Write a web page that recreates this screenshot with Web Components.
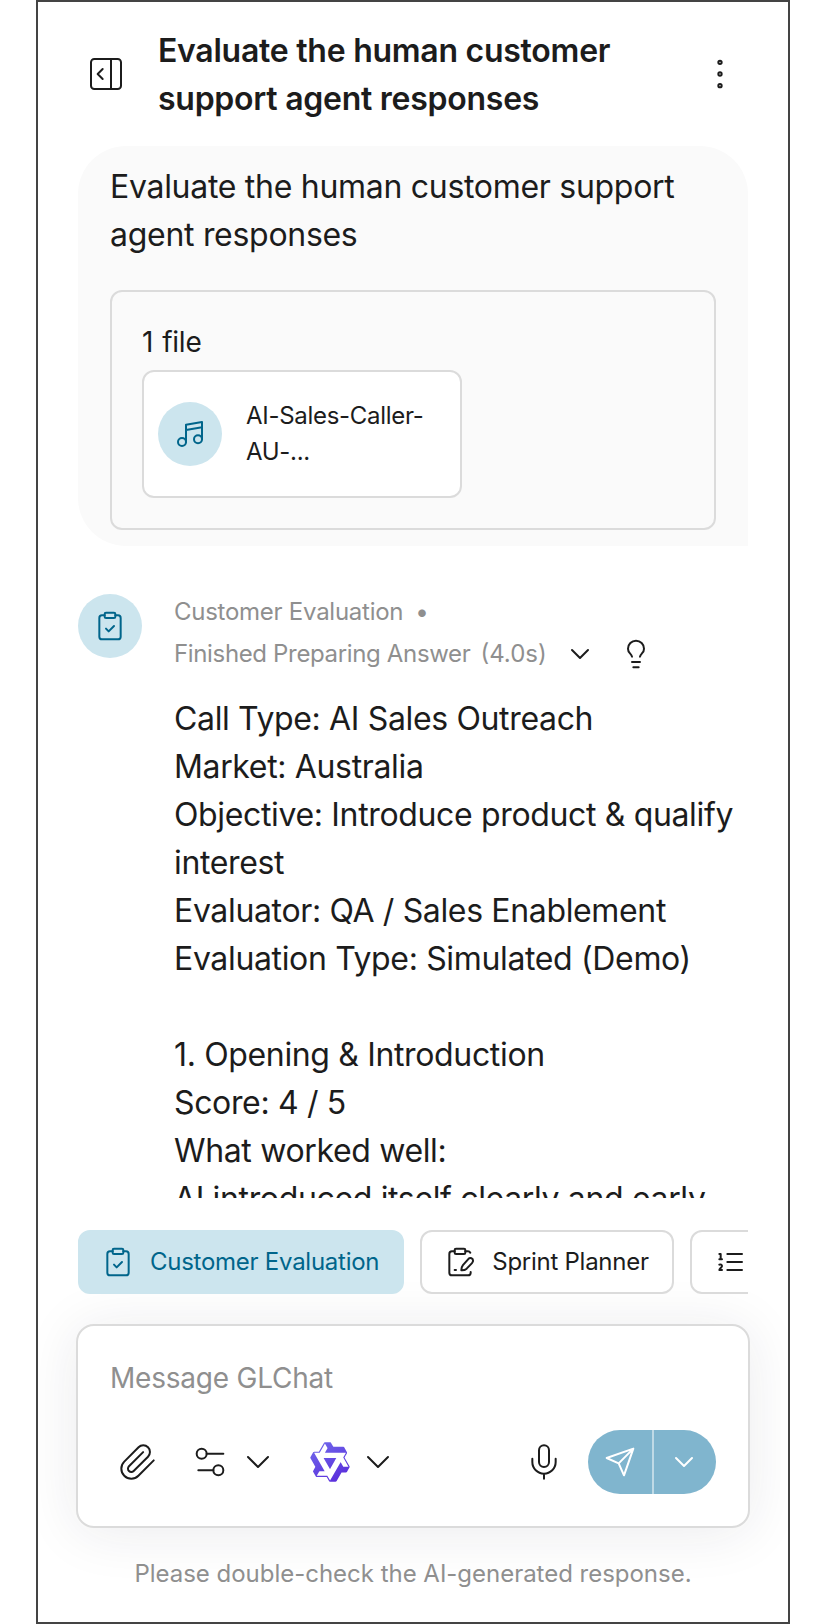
<!DOCTYPE html>
<html lang="en">
<head>
<meta charset="utf-8">
<title>GLChat</title>
<style>
    html, body {
        margin: 0;
        background: #ffffff;
    }
    body {
        --text: #1c1c1c;
        --muted: #8f8f8f;
        --line: #dbdbdb;
        --accent: #00658b;
        --accent-soft: #cce5ee;
        --accent-mid: #80b5ce;
        font-family: Inter, "Liberation Sans", sans-serif;
        letter-spacing: -0.26px;
        color: var(--text);
    }
</style>
</head>
<body>

<chat-screen>
    <chat-header slot="header">Evaluate the human customer support agent responses</chat-header>

    <user-message>
        Evaluate the human customer support agent responses
        <file-list slot="files" label="1 file">
            <file-card icon="music">AI-Sales-Caller-AU-...</file-card>
        </file-list>
    </user-message>

    <agent-message agent="Customer Evaluation" status="Finished Preparing Answer" time="(4.0s)">Call Type: AI Sales Outreach
Market: Australia
Objective: Introduce product &amp; qualify interest
Evaluator: QA / Sales Enablement
Evaluation Type: Simulated (Demo)

1. Opening &amp; Introduction
Score: 4 / 5
What worked well:
AI introduced itself clearly and early</agent-message>

    <agent-chips slot="footer">
        <agent-chip icon="clipboard-check" active>Customer Evaluation</agent-chip>
        <agent-chip icon="clipboard-pen">Sprint Planner</agent-chip>
        <agent-chip icon="list-ordered"></agent-chip>
    </agent-chips>
    <message-composer slot="footer" placeholder="Message GLChat"></message-composer>
    <chat-note slot="footer">Please double-check the AI-generated response.</chat-note>
</chat-screen>

<script>
    // Stroke icons on a 24 x 24 grid
    const ICONS = {
        "panel": '<rect x="3" y="3" width="18" height="18" rx="2"/><path d="M15 3v18M10 15l-3-3 3-3"/>',
        "more": '<circle cx="12" cy="5" r="1"/><circle cx="12" cy="12" r="1"/><circle cx="12" cy="19" r="1"/>',
        "music": '<path d="M9 18V5l12-2v13M9 9l12-2"/><circle cx="6" cy="18" r="3"/><circle cx="18" cy="16" r="3"/>',
        "clipboard-check": '<rect x="8" y="2" width="8" height="4" rx="1"/><path d="M16 4h2a2 2 0 0 1 2 2v14a2 2 0 0 1-2 2H6a2 2 0 0 1-2-2V6a2 2 0 0 1 2-2h2"/><path d="m9 14 2 2 4-4"/>',
        "clipboard-pen": '<rect x="8" y="2" width="8" height="4" rx="1"/><path d="M8 4H6a2 2 0 0 0-2 2v14a2 2 0 0 0 2 2h12a2 2 0 0 0 2-2v-.5"/><path d="M16 4h2a2 2 0 0 1 1.73 1M8 18h1"/><path d="M18.4 9.6a2 2 0 0 1 3.4 1.4c0 .6-.4 1.2-.8 1.8L17 17c-1 .9-2.4 1.3-4 1.2 0-1.5.4-2.8 1.2-3.8Z"/>',
        "list-ordered": '<path d="M10 6h11M10 12h11M10 18h11M4 6h1v4M4 10h2M6 18H4c0-1 2-2 2-3s-1-1.5-2-1"/>',
        "chevron": '<path d="m6 9 6 6 6-6"/>',
        "bulb": '<path d="M15 14c.2-1 .7-1.7 1.5-2.5 1-.9 1.5-2.2 1.5-3.5A6 6 0 0 0 6 8c0 1 .2 2.2 1.5 3.5.7.7 1.3 1.5 1.5 2.5M9 18h6M10 22h4"/>',
        "paperclip": '<path d="m21.44 11.05-9.19 9.19a6 6 0 0 1-8.49-8.49l8.57-8.57A4 4 0 1 1 18 8.84l-8.59 8.57a2 2 0 0 1-2.83-2.83l8.49-8.48"/>',
        "settings": '<path d="M20 7h-10M14 17H5"/><circle cx="17" cy="17" r="3"/><circle cx="7" cy="7" r="3"/>',
        "mic": '<path d="M12 2a3 3 0 0 0-3 3v7a3 3 0 0 0 6 0V5a3 3 0 0 0-3-3Z"/><path d="M19 10v2a7 7 0 0 1-14 0v-2M12 19v3"/>',
        "send": '<path d="m22 2-7 20-4-9-9-4ZM22 2 11 13"/>',
        "qwen": '<defs><linearGradient id="g" x1="0" y1="0" x2=".6" y2="1"><stop offset="0" stop-color="#716cec"/><stop offset="1" stop-color="#5b30dc"/></linearGradient></defs><path transform="translate(-.9 -.9) scale(1.075)" fill="url(#g)" stroke="none" fill-rule="evenodd" d="M12.604 1.34c.393.69.784 1.382 1.174 2.075a.18.18 0 00.157.091h5.552c.174 0 .322.11.446.327l1.454 2.57c.19.337.24.478.024.837-.26.43-.513.864-.76 1.3l-.367.658c-.106.196-.223.28-.04.512l2.652 4.637c.172.301.111.494-.043.77-.437.785-.882 1.564-1.335 2.34-.159.272-.352.375-.68.37-.777-.016-1.552-.01-2.327.016a.099.099 0 00-.081.05 575.097 575.097 0 01-2.705 4.74c-.169.293-.38.363-.725.364-.997.003-2.002.004-3.017.002a.537.537 0 01-.465-.271l-1.335-2.323a.09.09 0 00-.083-.049H4.982c-.285.03-.553-.001-.805-.092l-1.603-2.77a.543.543 0 01-.002-.54l1.207-2.12a.198.198 0 000-.197 550.951 550.951 0 01-1.875-3.272l-.79-1.395c-.16-.31-.173-.496.095-.965.465-.813.927-1.625 1.387-2.436.132-.234.304-.334.584-.335a338.3 338.3 0 012.589-.001.124.124 0 00.107-.063l2.806-4.895a.488.488 0 01.422-.246c.524-.001 1.053 0 1.583-.006L11.704 1c.341-.003.724.032.9.34zm-3.432.403a.06.06 0 00-.052.03L6.254 6.788a.157.157 0 01-.135.078H3.253c-.056 0-.07.025-.041.074l5.81 10.156c.025.042.013.062-.034.063l-2.795.015a.218.218 0 00-.2.116l-1.32 2.31c-.044.078-.021.118.068.118l5.716.008c.046 0 .08.02.104.061l1.403 2.454c.046.081.092.082.139 0l5.006-8.76.783-1.382a.055.055 0 01.096 0l1.424 2.53a.122.122 0 00.107.062l2.763-.02a.04.04 0 00.035-.02.041.041 0 000-.04l-2.9-5.086a.108.108 0 010-.113l.293-.507 1.12-1.977c.024-.041.012-.062-.035-.062H9.2c-.059 0-.073-.026-.043-.077l1.434-2.505a.107.107 0 000-.114L9.225 1.774a.06.06 0 00-.053-.031zm6.29 8.02c.046 0 .058.02.034.06l-.832 1.465-2.613 4.585a.056.056 0 01-.05.029.058.058 0 01-.05-.029L8.498 9.841c-.02-.034-.01-.052.028-.054l.216-.012 6.722-.012z"/>'
    };

    // Opens a shadow root on the element and fills it with the markup
    function render(element, markup) {
        element.attachShadow({mode: "open"}).innerHTML = markup;
    }

    class ChatIcon extends HTMLElement {
        connectedCallback() {
            if (this.shadowRoot) return;
            var size = Number(this.getAttribute("size") || 32);
            render(this, `
                <style>
                    :host { display: block; flex: none; width: ${size}px; height: ${size}px; }
                    svg { display: block; }
                </style>
                <svg width="${size}" height="${size}" viewBox="0 0 24 24" fill="none" stroke="currentColor"
                    stroke-width="${48 / size}" stroke-linecap="round" stroke-linejoin="round">
                    ${ICONS[this.getAttribute("name")]}
                </svg>
            `);
        }
    }

    class ChatScreen extends HTMLElement {
        constructor() {
            super();
            render(this, `
                <style>
                    :host {
                        display: flex;
                        flex-direction: column;
                        box-sizing: border-box;
                        width: 754px;
                        height: 1624px;
                        margin-left: 36px;
                        padding: 0 40px;
                        border: 2px solid #444444;
                        overflow: hidden;
                    }
                    main {
                        flex: none;
                        height: 1052px;
                        overflow: hidden;
                    }
                    footer {
                        display: flex;
                        flex-direction: column;
                        padding-top: 32px;
                    }
                </style>
                <slot name="header"></slot>
                <main><slot></slot></main>
                <footer><slot name="footer"></slot></footer>
            `);
        }
    }

    class ChatHeader extends HTMLElement {
        constructor() {
            super();
            render(this, `
                <style>
                    :host {
                        display: flex;
                        flex: none;
                        align-items: center;
                        box-sizing: border-box;
                        height: 144px;
                        padding: 0 8px;
                    }
                    h1 {
                        flex: 1;
                        margin: 0 32px;
                        padding-top: 2px;
                        font-size: 32px;
                        line-height: 48px;
                        font-weight: 600;
                    }
                </style>
                <chat-icon name="panel" size="40"></chat-icon>
                <h1><slot></slot></h1>
                <chat-icon name="more" size="40"></chat-icon>
            `);
        }
    }

    class UserMessage extends HTMLElement {
        constructor() {
            super();
            render(this, `
                <style>
                    :host {
                        display: block;
                        padding: 17px 32px 16px;
                        border-radius: 48px 48px 0 48px;
                        background: #fafafa;
                        font-size: 32px;
                        line-height: 48px;
                    }
                    .text { letter-spacing: -0.29px; }
                    .files { margin-top: 31px; }
                </style>
                <div class="text"><slot></slot></div>
                <div class="files"><slot name="files"></slot></div>
            `);
        }
    }

    class FileList extends HTMLElement {
        connectedCallback() {
            if (this.shadowRoot) return;
            render(this, `
                <style>
                    :host {
                        display: block;
                        padding: 30px;
                        border: 2px solid var(--line);
                        border-radius: 12px;
                    }
                    .label {
                        margin-bottom: 8px;
                        font-size: 28px;
                        line-height: 40px;
                        word-spacing: 1.5px;
                    }
                </style>
                <div class="label">${this.getAttribute("label")}</div>
                <slot></slot>
            `);
        }
    }

    class FileCard extends HTMLElement {
        connectedCallback() {
            if (this.shadowRoot) return;
            render(this, `
                <style>
                    :host {
                        display: flex;
                        align-items: center;
                        gap: 24px;
                        box-sizing: border-box;
                        width: 320px;
                        height: 128px;
                        padding: 0 14px;
                        border: 2px solid var(--line);
                        border-radius: 12px;
                        background: #ffffff;
                    }
                    .badge {
                        display: grid;
                        place-items: center;
                        flex: none;
                        width: 64px;
                        height: 64px;
                        border-radius: 50%;
                        background: var(--accent-soft);
                        color: var(--accent);
                    }
                    .name {
                        font-size: 24px;
                        line-height: 36px;
                        letter-spacing: -0.29px;
                    }
                </style>
                <div class="badge"><chat-icon name="${this.getAttribute("icon")}"></chat-icon></div>
                <div class="name"><slot></slot></div>
            `);
        }
    }

    class AgentMessage extends HTMLElement {
        connectedCallback() {
            if (this.shadowRoot) return;
            render(this, `
                <style>
                    :host {
                        display: flex;
                        align-items: flex-start;
                        gap: 32px;
                        margin-top: 48px;
                    }
                    .avatar {
                        display: grid;
                        place-items: center;
                        flex: none;
                        width: 64px;
                        height: 64px;
                        border-radius: 50%;
                        background: var(--accent-soft);
                        color: var(--accent);
                    }
                    .row {
                        display: flex;
                        align-items: center;
                        font-size: 24px;
                        line-height: 36px;
                        color: var(--muted);
                    }
                    .agent { gap: 12px; }
                    .status {
                        height: 48px;
                        letter-spacing: -0.35px;
                    }
                    .time {
                        margin-left: 10px;
                        letter-spacing: 0;
                    }
                    chat-icon { color: var(--text); }
                    .avatar chat-icon { color: inherit; }
                    .status chat-icon:nth-of-type(1) { margin: 0 24px 0 17px; }
                    .body {
                        margin-top: 17px;
                        font-size: 32px;
                        line-height: 48px;
                        letter-spacing: -0.35px;
                        white-space: pre-line;
                    }
                </style>
                <div class="avatar"><chat-icon name="clipboard-check"></chat-icon></div>
                <div>
                    <div class="row agent"><span>${this.getAttribute("agent")}</span><span>•</span></div>
                    <div class="row status">
                        <span>${this.getAttribute("status")}</span>
                        <span class="time">${this.getAttribute("time")}</span>
                        <chat-icon name="chevron"></chat-icon>
                        <chat-icon name="bulb"></chat-icon>
                    </div>
                    <div class="body"><slot></slot></div>
                </div>
            `);
        }
    }

    class AgentChips extends HTMLElement {
        constructor() {
            super();
            render(this, `
                <style>
                    :host {
                        display: flex;
                        gap: 16px;
                        overflow: hidden;
                        position: relative;
                        z-index: 1;
                    }
                </style>
                <slot></slot>
            `);
        }
    }

    class AgentChip extends HTMLElement {
        connectedCallback() {
            if (this.shadowRoot) return;
            render(this, `
                <style>
                    :host {
                        display: flex;
                        flex: none;
                        align-items: center;
                        gap: 16px;
                        box-sizing: border-box;
                        height: 64px;
                        padding: 0 23px 0 22px;
                        border: 2px solid var(--line);
                        border-radius: 12px;
                        background: #ffffff;
                        font-size: 24px;
                        line-height: 36px;
                        white-space: nowrap;
                    }
                    :host([active]) {
                        border-color: var(--accent-soft);
                        background: var(--accent-soft);
                        color: var(--accent);
                    }
                </style>
                <chat-icon name="${this.getAttribute("icon")}"></chat-icon>
                <span><slot></slot></span>
            `);
        }
    }

    class MessageComposer extends HTMLElement {
        connectedCallback() {
            if (this.shadowRoot) return;
            render(this, `
                <style>
                    :host {
                        display: block;
                        box-sizing: border-box;
                        height: 204px;
                        margin: 30px -2px 0;
                        padding: 32px;
                        border: 2px solid var(--line);
                        border-radius: 18px;
                        background: #ffffff;
                        box-shadow: 0 4px 56px rgba(30, 35, 60, 0.09);
                    }
                    .placeholder {
                        font-size: 28px;
                        line-height: 40px;
                        letter-spacing: -0.22px;
                        color: var(--muted);
                    }
                    .tools {
                        display: flex;
                        align-items: center;
                        height: 64px;
                        margin-top: 32px;
                        padding-left: 8px;
                    }
                    .picker {
                        display: flex;
                        gap: 8px;
                        margin-left: 32px;
                    }
                    .mic { margin: 0 24px 0 auto; }
                    .send {
                        display: flex;
                        width: 128px;
                        height: 64px;
                        border-radius: 32px;
                        background: var(--accent-mid);
                        color: #ffffff;
                        overflow: hidden;
                    }
                    .send div {
                        display: grid;
                        place-items: center;
                        box-sizing: border-box;
                        width: 64px;
                    }
                    .send div + div {
                        padding-right: 2px;
                        border-left: 2px solid #bfdae6;
                    }
                </style>
                <div class="placeholder">${this.getAttribute("placeholder")}</div>
                <div class="tools">
                    <chat-icon name="paperclip" size="40"></chat-icon>
                    <div class="picker">
                        <chat-icon name="settings" size="40"></chat-icon>
                        <chat-icon name="chevron" size="40"></chat-icon>
                    </div>
                    <div class="picker">
                        <chat-icon name="qwen" size="40"></chat-icon>
                        <chat-icon name="chevron" size="40"></chat-icon>
                    </div>
                    <chat-icon class="mic" name="mic" size="40"></chat-icon>
                    <div class="send">
                        <div><chat-icon name="send"></chat-icon></div>
                        <div><chat-icon name="chevron"></chat-icon></div>
                    </div>
                </div>
            `);
        }
    }

    class ChatNote extends HTMLElement {
        constructor() {
            super();
            render(this, `
                <style>
                    :host {
                        display: block;
                        margin-top: 28px;
                        font-size: 24px;
                        line-height: 36px;
                        letter-spacing: -0.02px;
                        text-align: center;
                        color: var(--muted);
                        position: relative;
                    }
                </style>
                <slot></slot>
            `);
        }
    }

    customElements.define("chat-icon", ChatIcon);
    customElements.define("chat-screen", ChatScreen);
    customElements.define("chat-header", ChatHeader);
    customElements.define("user-message", UserMessage);
    customElements.define("file-list", FileList);
    customElements.define("file-card", FileCard);
    customElements.define("agent-message", AgentMessage);
    customElements.define("agent-chips", AgentChips);
    customElements.define("agent-chip", AgentChip);
    customElements.define("message-composer", MessageComposer);
    customElements.define("chat-note", ChatNote);
</script>
</body>
</html>
